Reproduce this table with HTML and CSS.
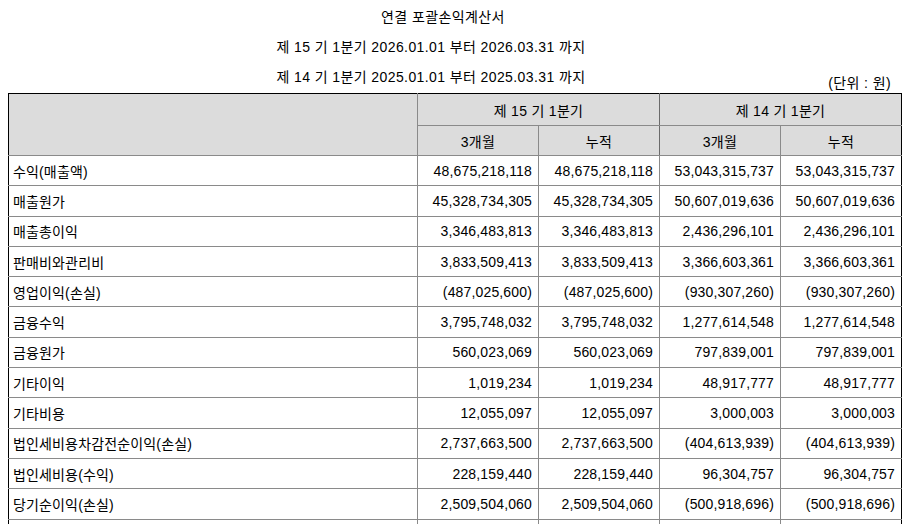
FILE: index.html
```html
<!DOCTYPE html>
<html lang="ko">
<head>
<meta charset="utf-8">
<title>연결 포괄손익계산서</title>
<link rel="stylesheet" href="styles.css">
</head>
<body>
<div class="titles">
  <div class="t t-main">연결 포괄손익계산서</div>
  <div class="t t-sub">제 15 기 1분기 2026.01.01 부터 2026.03.31 까지</div>
  <div class="t-row">
    <span class="t t-sub">제 14 기 1분기 2025.01.01 부터 2025.03.31 까지</span>
    <span class="unit">(단위 : 원)</span>
  </div>
</div>
<table class="fin">
  <colgroup>
    <col class="c-label"><col class="c-num"><col class="c-num"><col class="c-num"><col class="c-num">
  </colgroup>
  <thead>
    <tr class="h1">
      <th rowspan="2"></th>
      <th colspan="2" class="grp">제 15 기 1분기</th>
      <th colspan="2">제 14 기 1분기</th>
    </tr>
    <tr class="h2">
      <th>3개월</th><th class="grp">누적</th><th>3개월</th><th>누적</th>
    </tr>
  </thead>
  <tbody>
    <tr><td class="lbl">수익(매출액)</td><td>48,675,218,118</td><td>48,675,218,118</td><td>53,043,315,737</td><td>53,043,315,737</td></tr>
    <tr><td class="lbl">매출원가</td><td>45,328,734,305</td><td>45,328,734,305</td><td>50,607,019,636</td><td>50,607,019,636</td></tr>
    <tr><td class="lbl">매출총이익</td><td>3,346,483,813</td><td>3,346,483,813</td><td>2,436,296,101</td><td>2,436,296,101</td></tr>
    <tr><td class="lbl">판매비와관리비</td><td>3,833,509,413</td><td>3,833,509,413</td><td>3,366,603,361</td><td>3,366,603,361</td></tr>
    <tr><td class="lbl">영업이익(손실)</td><td>(487,025,600)</td><td>(487,025,600)</td><td>(930,307,260)</td><td>(930,307,260)</td></tr>
    <tr><td class="lbl">금융수익</td><td>3,795,748,032</td><td>3,795,748,032</td><td>1,277,614,548</td><td>1,277,614,548</td></tr>
    <tr><td class="lbl">금융원가</td><td>560,023,069</td><td>560,023,069</td><td>797,839,001</td><td>797,839,001</td></tr>
    <tr><td class="lbl">기타이익</td><td>1,019,234</td><td>1,019,234</td><td>48,917,777</td><td>48,917,777</td></tr>
    <tr><td class="lbl">기타비용</td><td>12,055,097</td><td>12,055,097</td><td>3,000,003</td><td>3,000,003</td></tr>
    <tr><td class="lbl">법인세비용차감전순이익(손실)</td><td>2,737,663,500</td><td>2,737,663,500</td><td>(404,613,939)</td><td>(404,613,939)</td></tr>
    <tr><td class="lbl">법인세비용(수익)</td><td>228,159,440</td><td>228,159,440</td><td>96,304,757</td><td>96,304,757</td></tr>
    <tr><td class="lbl">당기순이익(손실)</td><td>2,509,504,060</td><td>2,509,504,060</td><td>(500,918,696)</td><td>(500,918,696)</td></tr>
    <tr><td class="lbl"></td><td></td><td></td><td></td><td></td></tr>
  </tbody>
</table>
</body>
</html>
```
FILE: styles.css
```css
html, body {
  margin: 0;
  padding: 0;
  background: #ffffff;
}
body {
  padding: 0 8px;
  font-family: "Liberation Sans", "Noto Sans CJK KR", sans-serif;
  font-size: 14px;
  color: #000000;
  overflow: hidden;
}
.titles {
  padding-top: 2px;
  padding-right: 28px;
}
.titles .t {
  display: block;
  text-align: center;
  height: 30px;
  line-height: 30px;
  letter-spacing: 0.4px;
}
.titles .t-main {
  padding-left: 6px;
}
.titles .t-sub {
  padding-right: 18px;
}
.t-row {
  display: grid;
  grid-template-columns: 1fr;
  height: 31px;
  margin-right: -28px;
}
.t-row .t,
.t-row .unit {
  grid-area: 1 / 1;
}
.t-row .t {
  justify-self: center;
  margin-right: 28px;
  height: 30px;
}
.t-row .unit {
  justify-self: end;
  align-self: end;
  line-height: 20px;
  margin-right: 9px;
  letter-spacing: 0.4px;
}
.fin {
  width: 100%;
  border-collapse: collapse;
  table-layout: fixed;
  border: 1px solid #000000;
}
.c-label { width: 409px; }
.c-num { width: 121px; }
.fin th, .fin td {
  border: 1px solid #8a8a8a;
  padding: 0;
  white-space: nowrap;
  overflow: hidden;
}
.fin thead th {
  background: #dcdcdc;
  font-weight: normal;
  text-align: center;
  letter-spacing: 0.3px;
}
.fin thead tr.h1 th { height: 31px; }
.fin thead tr.h2 th { height: 29px; }
.fin thead th.grp { border-right-color: #6a6a6a; }
.fin tbody tr { height: 30.3px; }
.fin tbody td {
  text-align: right;
  padding-right: 6px;
  letter-spacing: 0.15px;
}
.fin tbody td.lbl {
  text-align: left;
  padding-left: 4px;
  padding-right: 0;
}
.fin tr > :first-child { border-left-color: #000000; }
.fin tr > :last-child { border-right-color: #000000; }
.fin thead tr.h1 th { border-top-color: #000000; }
```
